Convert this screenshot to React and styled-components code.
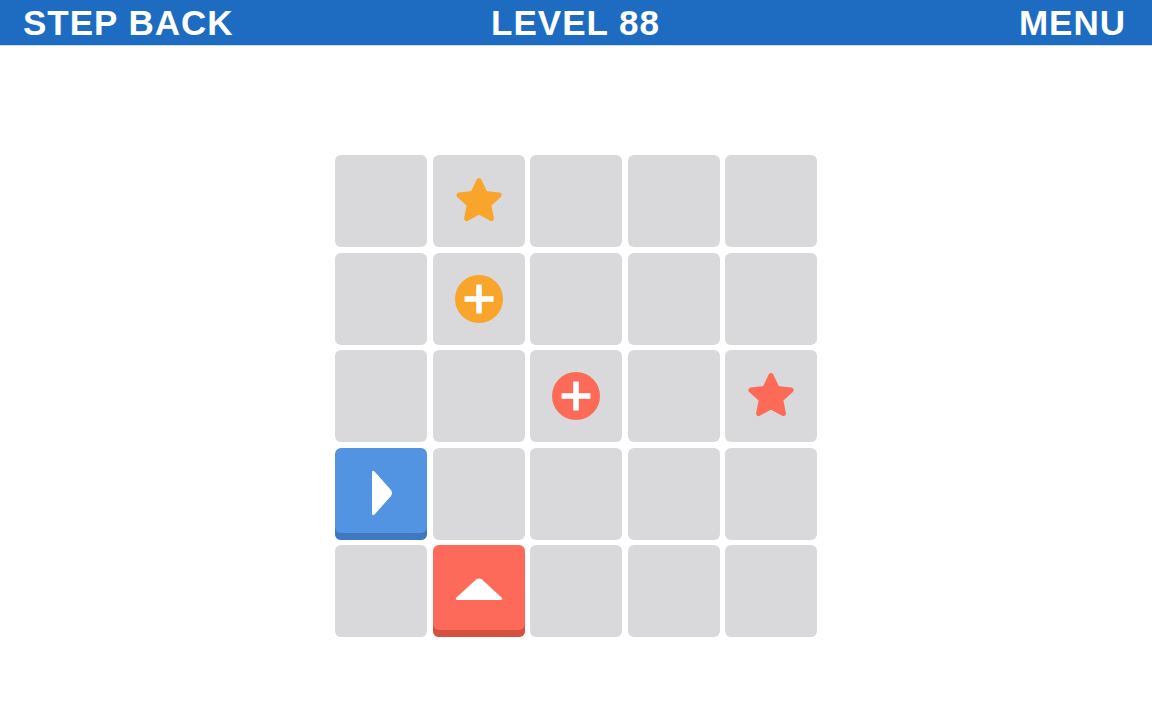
import React from "react";
import styled, { createGlobalStyle } from "styled-components";

const GlobalStyle = createGlobalStyle`
  html, body {
    margin: 0;
    padding: 0;
    background: #ffffff;
  }
  body {
    font-family: "Liberation Sans", Arial, sans-serif;
  }
`;

const Page = styled.div`
  width: 1152px;
  height: 720px;
  display: flex;
  flex-direction: column;
  background: #ffffff;
  overflow: hidden;
`;

const TopBar = styled.div`
  height: 45px;
  background: #1d6cc2;
  border-bottom: 1px solid #cfe0f3;
  display: grid;
  grid-template-columns: 1fr auto 1fr;
  align-items: center;
  padding: 0 26px 0 23px;
`;

const BarText = styled.button`
  all: unset;
  font-family: "Liberation Sans", Arial, sans-serif;
  font-weight: 700;
  font-size: 35px;
  color: #ffffff;
  letter-spacing: 1px;
  line-height: 45px;
  cursor: pointer;
  justify-self: ${(p) => (p.$right ? "end" : "start")};
`;

const Title = styled.div`
  font-family: "Liberation Sans", Arial, sans-serif;
  font-weight: 700;
  font-size: 35px;
  color: #ffffff;
  letter-spacing: 1px;
  line-height: 45px;
  margin-left: 2px;
`;

const Board = styled.div`
  display: grid;
  grid-template-columns: repeat(5, 92px);
  grid-auto-rows: 92px;
  gap: 5.5px;
  margin: 109px 0 0 335px;
`;

const palette = {
  empty: { face: "#d9d8da", edge: "#d9d8da" },
  blue: { face: "#5294e2", edge: "#3d78c0" },
  red: { face: "#fe6a59", edge: "#d5503f" },
};

const Cell = styled.div`
  position: relative;
  border-radius: 6px;
  background: ${(p) => palette[p.$kind].face};
  box-shadow: ${(p) =>
    p.$kind === "empty" ? "none" : `inset 0 -7px 0 ${palette[p.$kind].edge}`};
  display: flex;
  align-items: center;
  justify-content: center;
`;

const colors = { orange: "#f9a42b", red: "#fd6a58" };

const Star = ({ color }) => (
  <svg width="54" height="54" viewBox="0 0 48 48" style={{ marginTop: 2 }}>
    <path
      d="M24 5 L29.4 16.4 L41.8 17.9 L32.6 26.4 L35 38.7 L24 32.6 L13 38.7 L15.4 26.4 L6.2 17.9 L18.6 16.4 Z"
      fill={color}
      stroke={color}
      strokeWidth="4.5"
      strokeLinejoin="round"
    />
  </svg>
);

const Plus = ({ color }) => (
  <svg width="50" height="50" viewBox="0 0 50 50">
    <circle cx="25" cy="25" r="24" fill={color} />
    <rect x="22.2" y="10.5" width="5.6" height="29" fill="#ffffff" />
    <rect x="10.5" y="22.2" width="29" height="5.6" fill="#ffffff" />
  </svg>
);

const ArrowRight = () => (
  <svg width="26" height="50" viewBox="0 0 26 50" style={{ marginBottom: 2, marginLeft: 2 }}>
    <path
      d="M3 5 L3 45 Q3 49 6 46 L22 28 Q24 25 22 22 L6 4 Q3 1 3 5 Z"
      fill="#ffffff"
    />
  </svg>
);

const ArrowUp = () => (
  <svg width="50" height="26" viewBox="0 0 50 26" style={{ marginBottom: 4 }}>
    <path
      d="M4 24 L46 24 Q50 24 47 21 L28 3.5 Q25 1.5 22 3.5 L3 21 Q0 24 4 24 Z"
      fill="#ffffff"
    />
  </svg>
);

const layout = [
  [null, { t: "star", c: "orange" }, null, null, null],
  [null, { t: "plus", c: "orange" }, null, null, null],
  [null, null, { t: "plus", c: "red" }, null, { t: "star", c: "red" }],
  [{ t: "right", k: "blue" }, null, null, null, null],
  [null, { t: "up", k: "red" }, null, null, null],
];

const renderItem = (item) => {
  if (!item) return null;
  if (item.t === "star") return <Star color={colors[item.c]} />;
  if (item.t === "plus") return <Plus color={colors[item.c]} />;
  if (item.t === "right") return <ArrowRight />;
  if (item.t === "up") return <ArrowUp />;
  return null;
};

export default function App() {
  return (
    <Page>
      <GlobalStyle />
      <TopBar>
        <BarText>STEP BACK</BarText>
        <Title>LEVEL 88</Title>
        <BarText $right>MENU</BarText>
      </TopBar>
      <Board>
        {layout.map((row, r) =>
          row.map((item, c) => (
            <Cell key={`${r}-${c}`} $kind={item && item.k ? item.k : "empty"}>
              {renderItem(item)}
            </Cell>
          ))
        )}
      </Board>
    </Page>
  );
}
